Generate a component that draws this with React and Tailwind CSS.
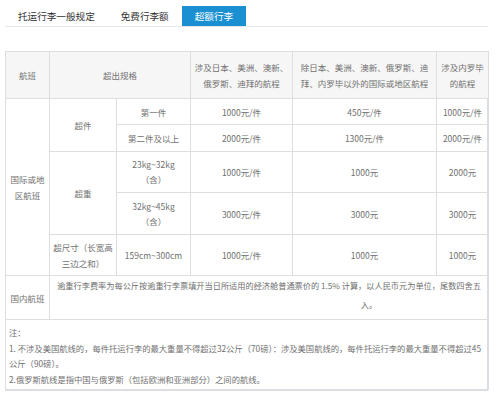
const font = { fontFamily: '"Noto Sans CJK SC", sans-serif' };

const td = 'border border-[#dedede] text-center align-middle p-0';

const tabs = ['托运行李一般规定', '免费行李额', '超额行李'];

const App = () => {
  return (
    <div className="w-[500px] h-[395px] bg-white text-[#707070]" style={font}>
      <div className="ml-[5px] w-[483px] pt-[6px]">
        <div className="flex border-b border-[#e6e6e6] h-[21px]">
          {tabs.map((t, i) => (
            <div
              key={t}
              className={
                i === 2
                  ? 'px-[13px] h-[20px] flex items-center text-[9.6px] bg-[#1a90d3] text-white'
                  : 'px-[13px] h-[20px] flex items-center text-[9.6px] text-[#333]'
              }
            >
              {t}
            </div>
          ))}
        </div>

        <div className="mt-[24px] border border-[#d8dee3] border-t-[#cfdbe3]">
          <table className="w-full table-fixed border-collapse text-[8.5px] leading-[16px] -mt-px -mx-px" style={{ width: 'calc(100% + 2px)' }}>
            <colgroup>
              <col className="w-[44px]" />
              <col className="w-[67px]" />
              <col className="w-[74px]" />
              <col className="w-[102px]" />
              <col className="w-[144px]" />
              <col className="w-[52px]" />
            </colgroup>
            <tbody>
              <tr className="h-[47px] bg-[#f6f6f6]">
                <td className={td}>航班</td>
                <td className={td} colSpan={2}>超出规格</td>
                <td className={td}>涉及日本、美洲、澳新、<br />俄罗斯、迪拜的航程</td>
                <td className={td}>除日本、美洲、澳新、俄罗斯、迪<br />拜、内罗毕以外的国际或地区航程</td>
                <td className={td}>涉及内罗毕<br />的航程</td>
              </tr>
              <tr className="h-[26px]">
                <td className={td} rowSpan={5}>国际或地<br />区航班</td>
                <td className={td} rowSpan={2}>超件</td>
                <td className={td}>第一件</td>
                <td className={td}>1000元/件</td>
                <td className={td}>450元/件</td>
                <td className={td}>1000元/件</td>
              </tr>
              <tr className="h-[27px]">
                <td className={td}>第二件及以上</td>
                <td className={td}>2000元/件</td>
                <td className={td}>1300元/件</td>
                <td className={td}>2000元/件</td>
              </tr>
              <tr className="h-[41px]">
                <td className={td} rowSpan={2}>超重</td>
                <td className={`${td} leading-[15px]`}>23kg~32kg<br />（含）</td>
                <td className={td}>1000元/件</td>
                <td className={td}>1000元</td>
                <td className={td}>2000元</td>
              </tr>
              <tr className="h-[42px]">
                <td className={`${td} leading-[15px]`}>32kg~45kg<br />（含）</td>
                <td className={td}>3000元/件</td>
                <td className={td}>3000元</td>
                <td className={td}>3000元</td>
              </tr>
              <tr className="h-[41px]">
                <td className={td}>超尺寸（长宽高<br />三边之和）</td>
                <td className={td}>159cm~300cm</td>
                <td className={td}>1000元/件</td>
                <td className={td}>1000元</td>
                <td className={td}>1000元</td>
              </tr>
              <tr className="h-[42px]">
                <td className={td}>国内航班</td>
                <td className={`${td} text-[8.2px] leading-[19px] pb-[5px]`} colSpan={5}>
                  <div className="whitespace-nowrap">逾重行李费率为每公斤按逾重行李票填开当日所适用的经济舱普通票价的 1.5% 计算，以人民币元为单位，尾数四舍五</div>
                  <div className="pl-[200px]">入。</div>
                </td>
              </tr>
              <tr>
                <td className="border border-[#dedede] text-left align-top pl-[3px] pt-[5px] pb-[2px] text-[8.3px] leading-[15.5px] whitespace-nowrap" colSpan={6}>
                  <div>注：</div>
                  <div>1. 不涉及美国航线的，每件托运行李的最大重量不得超过32公斤（70磅）：涉及美国航线的，每件托运行李的最大重量不得超过45</div>
                  <div>公斤（90磅）。</div>
                  <div>2.俄罗斯航线是指中国与俄罗斯（包括欧洲和亚洲部分）之间的航线。</div>
                </td>
              </tr>
            </tbody>
          </table>
        </div>
      </div>
    </div>
  );
};

export default App;
